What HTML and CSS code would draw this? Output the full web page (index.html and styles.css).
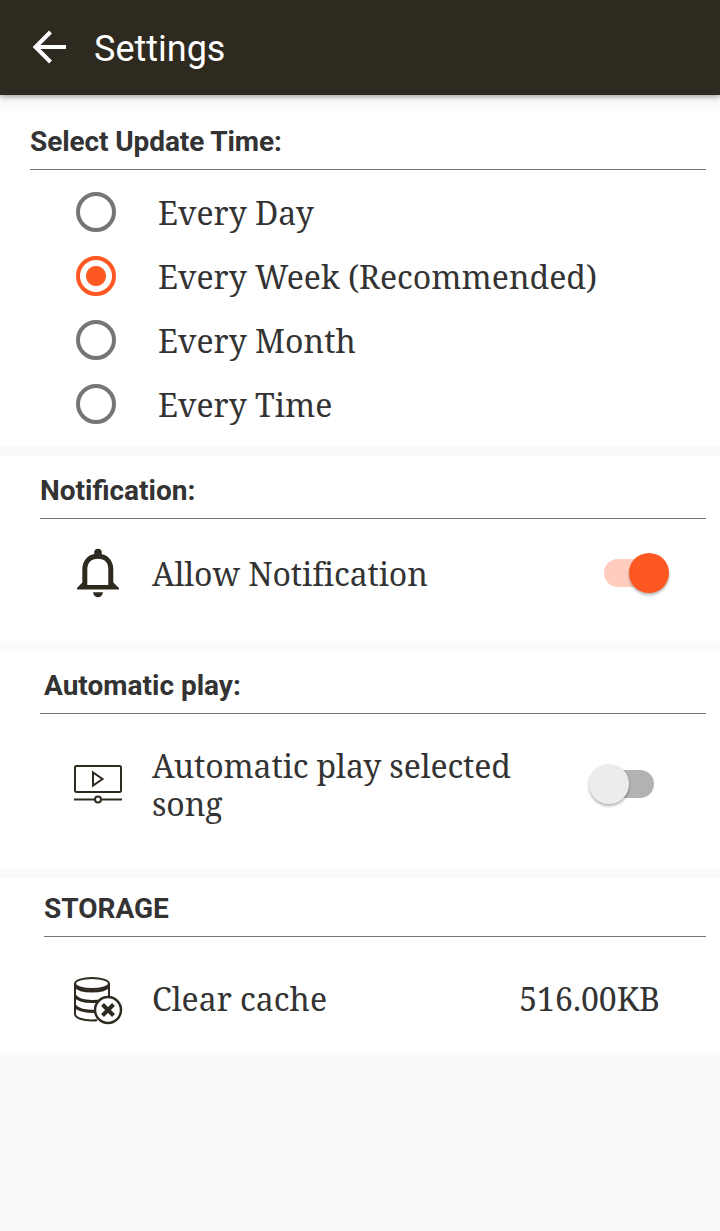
FILE: index.html
```html
<!DOCTYPE html>
<html lang="en">

<head>
    <meta charset="UTF-8">
    <meta name="viewport" content="width=device-width, initial-scale=1.0">
    <title>Settings</title>
    <link rel="stylesheet" href="styles.css">
</head>

<body>
    <header class="toolbar">
        <svg class="back" width="36" height="36" viewBox="0 0 36 36" fill="none" stroke="#fff" stroke-width="4">
            <path d="M35 18H4M19.500 3L4.500 18l15 15" />
        </svg>
        <h1>Settings</h1>
    </header>

    <main>
        <section class="card update">
            <h2>Select Update Time:</h2>
            <label class="option"><span class="radio"></span><span class="text">Every Day</span></label>
            <label class="option"><span class="radio checked"></span><span class="text">Every Week (Recommended)</span></label>
            <label class="option"><span class="radio"></span><span class="text">Every Month</span></label>
            <label class="option"><span class="radio"></span><span class="text">Every Time</span></label>
        </section>

        <section class="card notification">
            <h2>Notification:</h2>
            <div class="row">
                <svg class="icon" width="52" height="52" viewBox="0 0 52 52">
                    <circle cx="26" cy="5.500" r="3.800" fill="#2e2a20" />
                    <path d="M12.800 40V22.500C12.800 14 18 9.200 25.800 9.200S38.800 14 38.800 22.500V40" fill="none" stroke="#2e2a20" stroke-width="5" />
                    <path d="M10.300 35.500L5 41v1.500h42V41l-5.700-5.500L36 38H15z" fill="#2e2a20" />
                    <path d="M21 45.300h10c-.5 3-2.500 5-5 5s-4.500-2-5-5z" fill="#2e2a20" />
                </svg>
                <span class="text">Allow Notification</span>
                <span class="switch on"></span>
            </div>
        </section>

        <section class="card autoplay">
            <h2>Automatic play:</h2>
            <div class="row">
                <svg class="icon" width="52" height="52" viewBox="0 0 52 52" fill="none" stroke="#2e2a20" stroke-width="2">
                    <rect x="3" y="7" width="46" height="26" rx="1.500" />
                    <path d="M21 13.500v13l9.500-6.500zM2 40.500h20.500M29.500 40.500H50" />
                    <circle cx="26" cy="40.500" r="3" />
                </svg>
                <span class="text">Automatic play selected<br>song</span>
                <span class="switch"></span>
            </div>
        </section>

        <section class="card storage">
            <h2>STORAGE</h2>
            <div class="row">
                <svg class="icon" width="52" height="52" viewBox="0 0 52 52" fill="none" stroke="#2e2a20" stroke-width="2">
                    <ellipse cx="20" cy="8.500" rx="17" ry="5.500" />
                    <path d="M3 8v31c0 4 8 6.500 17 6.500 2 0 4 0 5-.5M37 8v13" />
                    <path d="M3 11c3 4 10 5 17 5s14-1 17-5M3 21c3 4 10 5.500 17 5.500 4 0 7 0 10-1M3 31c3 4 10 5.500 20 5.500" stroke-width="3" />
                    <circle cx="36" cy="35" r="13" fill="#fff" stroke-width="2.500" />
                    <path d="M30.500 29.500l11 11M41.500 29.500l-11 11" stroke-width="4" />
                </svg>
                <span class="text">Clear cache</span>
                <span class="text size">516.00KB</span>
            </div>
        </section>
    </main>
</body>

</html>
```
FILE: styles.css
```css
body {
    margin: 0;
    background-color: #fafafa;
    color: #333;
}

.toolbar {
    display: flex;
    align-items: center;
    height: 95px;
    box-sizing: border-box;
    padding-left: 31px;
    background-color: #2e2a20;
    box-shadow: 0 1px 6px rgba(0, 0, 0, 0.45);
}

.back {
    margin-bottom: 2px;
}

.toolbar h1 {
    margin: 3px 0 0 27px;
    font: 400 36px/42px Roboto, sans-serif;
    color: #fff;
}

main {
    display: flex;
    flex-direction: column;
    gap: 10px;
    padding-top: 16px;
}

.card {
    box-sizing: border-box;
    background-color: #fff;
    padding: 0 14px 0 40px;
}

.card h2 {
    box-sizing: border-box;
    height: 63px;
    margin: 0;
    padding-top: 18px;
    border-bottom: 1px solid #757575;
    font: bold 28px/33px Roboto, sans-serif;
}

.update {
    height: 335px;
    padding-left: 30px;
}

.update h2 {
    height: 59px;
    padding-top: 14px;
    margin-bottom: 10px;
    letter-spacing: -0.1px;
}

.notification {
    height: 185px;
}

.autoplay {
    height: 217px;
}

.autoplay h2 {
    padding-left: 4px;
}

.storage {
    height: 177px;
    padding-left: 44px;
}

.storage h2 {
    height: 59px;
    padding-top: 14px;
}

.text {
    font: 32px/38px "Noto Serif", "Droid Serif", "DejaVu Serif", serif;
    white-space: nowrap;
}

.option {
    display: flex;
    align-items: center;
    height: 64px;
    padding-left: 46px;
    gap: 42px;
}

.option .text {
    margin-top: 2px;
}

.radio {
    box-sizing: border-box;
    width: 40px;
    height: 40px;
    border: 4px solid #757575;
    border-radius: 50%;
}

.radio.checked {
    border-color: #ff5722;
    background: radial-gradient(circle, #ff5722 9.5px, transparent 10.5px);
}

.row {
    display: flex;
    align-items: center;
    height: 108px;
    padding-left: 32px;
}

.icon {
    flex: none;
    margin-right: 28px;
}

.notification .text {
    margin-top: 2px;
    letter-spacing: -0.1px;
    font-variant-ligatures: common-ligatures;
}

.autoplay .row {
    height: 141px;
}

.autoplay .text {
    letter-spacing: -0.12px;
}

.storage .row {
    height: 128px;
    padding-left: 28px;
}

.storage .text {
    margin-bottom: 4px;
}

.switch {
    position: relative;
    width: 54px;
    height: 28px;
    margin: 0 52px 1px auto;
    border-radius: 14px;
    background-color: #b2b2b2;
}

.switch::after {
    content: "";
    position: absolute;
    top: -6px;
    left: -11px;
    width: 40px;
    height: 40px;
    border-radius: 50%;
    background-color: #ececec;
    box-shadow: 0 2px 3px rgba(0, 0, 0, 0.3);
}

.switch.on {
    margin: 0 48px 0 auto;
    background-color: #ffccbd;
}

.switch.on::after {
    left: 25px;
    background-color: #ff5722;
}

.storage .size {
    margin: 0 46px 4px auto;
}
```
